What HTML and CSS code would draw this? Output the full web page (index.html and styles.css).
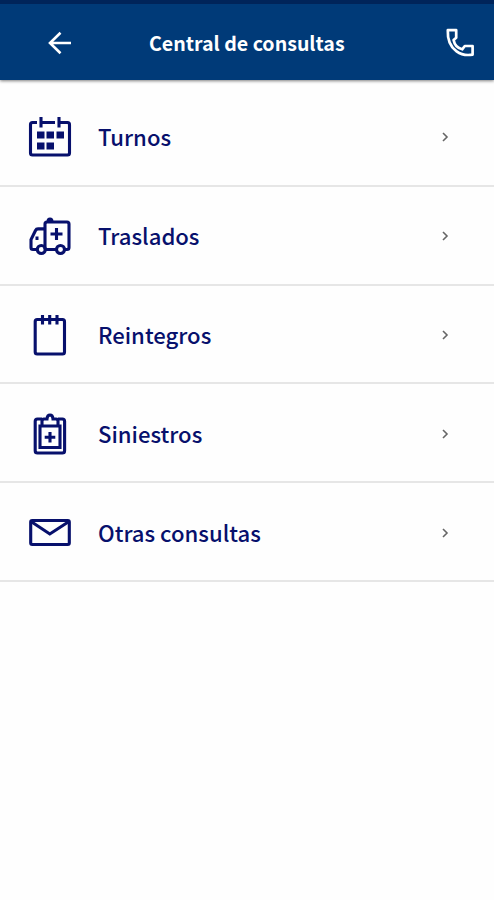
FILE: index.html
```html
<!DOCTYPE html>
<html lang="es">
<head>
    <meta charset="UTF-8">
    <meta name="viewport" content="width=device-width, initial-scale=1.0">
    <title>Central de consultas</title>
    <link rel="stylesheet" href="styles.css">
</head>
<body>
<header class="topbar">
    <svg class="back" viewBox="0 0 24 24"><path d="M23 12H2M12.500 1.800L2 12l10.500 10.200"/></svg>
    <h1 class="title">Central de consultas</h1>
    <svg class="phone" viewBox="0 0 30 30"><path d="M2.800 2.200h8.400v7.600L8.600 12c.8 4.500 4.200 8.200 8.600 9.300l2.600-3.300h7.800v8.600c-4 .7-10.500.8-16-3.200C4.800 18.500 2.400 11 2.800 2.200z"/></svg>
</header>
<main>
    <ul class="menu">
        <li class="item">
            <svg class="icon" viewBox="8 7.500 44 44">
                <path d="M17 15h-4.500q-2 0-2 2v28.500q0 2 2 2h35q2 0 2-2V17q0-2-2-2H39M21 15h14M21 9.500v10.500M39 9.500v10.500"/>
                <path class="fill" d="M17 24h7.500v7H17zM26.500 24H34v7h-7.500zM36.500 24H44v7h-7.500zM17 35h7.500v7H17zM26.500 35H34v7h-7.500z"/>
            </svg>
            <span class="label">Turnos</span>
            <svg class="chevron" viewBox="0 0 8 12"><path d="M2 2l4 4-4 4"/></svg>
        </li>
        <li class="item">
            <svg class="icon" viewBox="8 7.500 44 44">
                <path d="M17 43h-4q-2 0-2-2v-8l4.500-9q.8-1.600 2.500-1.600h6.500M25 43V17.500q0-2 2-2h20q2 0 2 2V41q0 2-2 2h-2M26 43h10M36.500 21.500v12M30.500 27.500h12"/>
                <path class="fill" d="M26.500 15q0-4 3.500-4t3.500 4zM15.500 30h3v3.500h-3z"/>
                <circle cx="21.300" cy="43" r="4"/>
                <circle cx="40.500" cy="43" r="4"/>
            </svg>
            <span class="label">Traslados</span>
            <svg class="chevron" viewBox="0 0 8 12"><path d="M2 2l4 4-4 4"/></svg>
        </li>
        <li class="item">
            <svg class="icon" viewBox="8 7.500 44 44">
                <rect x="15.200" y="14" width="29.300" height="34.500" rx="2"/>
                <path d="M22.500 9.500v9.500M29.700 9.500v9.500M37 9.500v9.500"/>
            </svg>
            <span class="label">Reintegros</span>
            <svg class="chevron" viewBox="0 0 8 12"><path d="M2 2l4 4-4 4"/></svg>
        </li>
        <li class="item">
            <svg class="icon" viewBox="8 7.500 44 44">
                <path d="M22 14.500h-4.500q-2.300 0-2.300 2.300v29.400q0 2.300 2.300 2.300h24.800q2.300 0 2.300-2.300V16.800q0-2.300-2.300-2.300H38"/>
                <path d="M20 21.500h20v21.500H20zM22 21.500v-5q0-2 2-2h3q.3-4 3-4t3 4h3q2 0 2 2v5M30 27.500v10.500M24.700 32.800h10.600"/>
            </svg>
            <span class="label">Siniestros</span>
            <svg class="chevron" viewBox="0 0 8 12"><path d="M2 2l4 4-4 4"/></svg>
        </li>
        <li class="item">
            <svg class="icon" viewBox="8 7.500 44 44">
                <rect x="10.700" y="17" width="38.600" height="24" rx="1.500"/>
                <path d="M11 18l18.800 12.500L49 18"/>
            </svg>
            <span class="label">Otras consultas</span>
            <svg class="chevron" viewBox="0 0 8 12"><path d="M2 2l4 4-4 4"/></svg>
        </li>
    </ul>
</main>
</body>
</html>
```

FILE: styles.css
```css
* {
    box-sizing: border-box;
}

body {
    margin: 0;
    background-color: #fefefe;
    color: #07106c;
    font-family: "Noto Sans CJK JP", "Noto Sans", sans-serif;
}

svg {
    display: block;
    flex: none;
    fill: none;
    stroke: currentColor;
}

.topbar {
    display: flex;
    align-items: center;
    height: 80px;
    padding: 1px 19px 0 48px;
    border-top: 4px solid #00245a;
    background-color: #003a78;
    color: white;
    box-shadow: 0 1px 3px rgba(0, 0, 0, 0.5);
}

.back {
    width: 24px;
    height: 24px;
    stroke-width: 2.6;
}

.title {
    flex: 1;
    margin: 0;
    padding-left: 77px;
    font-size: 19.6px;
    font-weight: 700;
    line-height: 30px;
    white-space: nowrap;
}

.phone {
    width: 30px;
    height: 30px;
    stroke-width: 2.7;
    stroke-linejoin: round;
}

.menu {
    margin: 0;
    padding: 8px 0 0;
    list-style: none;
}

.item {
    display: flex;
    align-items: center;
    height: 98.8px;
    padding: 2px 45px 0 28px;
    border-bottom: 2px solid #e6e6e6;
}

.icon {
    width: 44px;
    height: 44px;
    stroke-width: 3.1;
}

.fill {
    fill: currentColor;
    stroke: none;
}

.label {
    flex: 1;
    padding: 0 0 2px 26px;
    font-size: 22.1px;
    font-weight: 500;
    line-height: 34px;
}

.chevron {
    width: 8px;
    height: 12px;
    color: #666;
    stroke-width: 1.6;
}
```
